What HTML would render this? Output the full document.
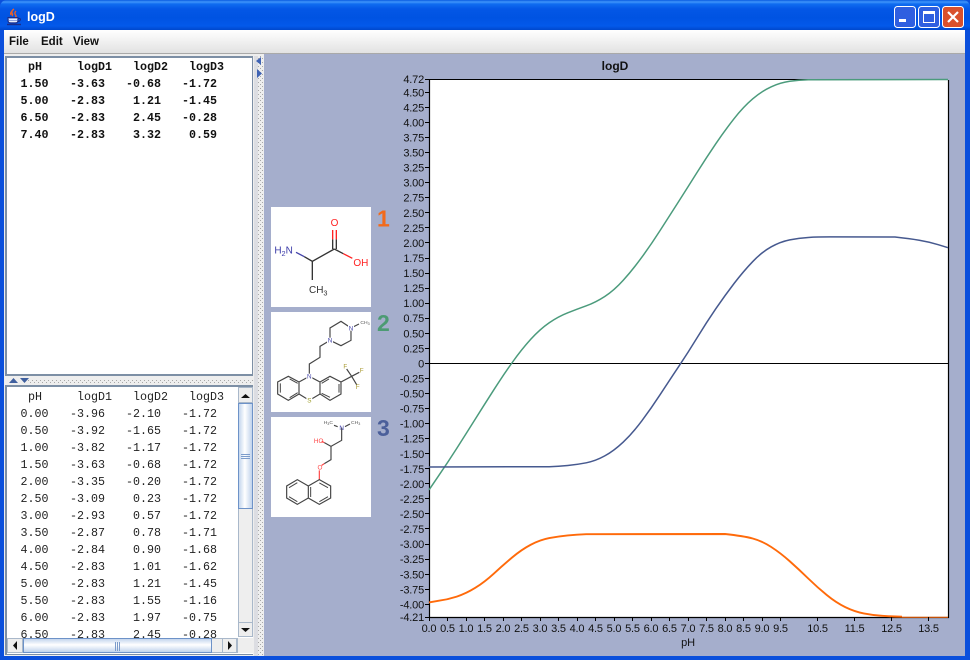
<!DOCTYPE html>
<html><head><meta charset="utf-8"><title>logD</title>
<style>
html,body{margin:0;padding:0;background:#fff}
#w{position:relative;width:970px;height:660px;overflow:hidden;background:#0a4fdc;font-family:"Liberation Sans",sans-serif}
#w div{position:absolute}
#tb{left:0;top:0;width:970px;height:30px;border-radius:7px 7px 0 0;background:linear-gradient(#0a5ce0 0,#3f95fb 2px,#0f6cf0 4px,#0457e6 9px,#0053e2 18px,#0359ea 26px,#0048cc 30px)}
#cr{left:4px;top:30px;width:961px;height:626px;background:#eeeeee}
#mb{left:4px;top:30px;width:961px;height:23px;background:linear-gradient(#fff,#f2f2f2 45%,#e2e2e2);border-bottom:1px solid #a9a9a9}
.m{top:35px;font-size:11.5px;font-weight:bold;color:#111;line-height:14px}
#rp{left:264px;top:54px;width:701px;height:602px;background:#a5aecc}
#t1{left:5px;top:56px;width:245px;height:316px;background:#fff;border:solid #7d8fa5;border-width:2px 1px 2px 2px}
#t2{left:5px;top:385px;width:246px;height:267px;background:#fff;border:solid #7d8fa5;border-width:2px 0 1px 2px;overflow:hidden}
.r{left:0;width:240px;height:17px;font:11.67px/17px "Liberation Mono",monospace;color:#222}
.b{font-weight:bold;color:#111}
.r span{position:absolute;top:0;text-align:right;white-space:pre}
.a{left:0;width:41.5px}.c{left:0;width:98px}.d{left:0;width:154px}.e{left:0;width:210px}
.ha{left:0;width:35px}.hc{left:0;width:105px}.hd{left:0;width:161px}.he{left:0;width:217px}
.sb{background:#eee;border:1px solid #a9b8ca;box-sizing:border-box}
.th{box-sizing:border-box;border:1px solid #6d92c8}
</style></head><body><div id="w">
<div id="tb"></div>
<div id="cr"></div>
<div id="mb"></div>
<div class="m" style="left:9px">File</div>
<div class="m" style="left:41px">Edit</div>
<div class="m" style="left:73px">View</div>
<div style="left:27px;top:9px;color:#fff;font-size:12.5px;font-weight:bold;line-height:16px">logD</div>
<div id="rp"></div>

<div id="t1">
<div class="r b" style="top:1px"><span class="ha">pH</span><span class="hc">logD1</span><span class="hd">logD2</span><span class="he">logD3</span></div>
<div class="r b" style="top:18px"><span class="a">1.50</span><span class="c">-3.63</span><span class="d">-0.68</span><span class="e">-1.72</span></div>
<div class="r b" style="top:35px"><span class="a">5.00</span><span class="c">-2.83</span><span class="d">1.21</span><span class="e">-1.45</span></div>
<div class="r b" style="top:52px"><span class="a">6.50</span><span class="c">-2.83</span><span class="d">2.45</span><span class="e">-0.28</span></div>
<div class="r b" style="top:69px"><span class="a">7.40</span><span class="c">-2.83</span><span class="d">3.32</span><span class="e">0.59</span></div>
</div>

<div id="t2"><div style="left:0;top:1px;width:240px;height:265px">
<div class="r" style="top:1px"><span class="ha">pH</span><span class="hc">logD1</span><span class="hd">logD2</span><span class="he">logD3</span></div>
<div class="r" style="top:18px"><span class="a">0.00</span><span class="c">-3.96</span><span class="d">-2.10</span><span class="e">-1.72</span></div>
<div class="r" style="top:35px"><span class="a">0.50</span><span class="c">-3.92</span><span class="d">-1.65</span><span class="e">-1.72</span></div>
<div class="r" style="top:52px"><span class="a">1.00</span><span class="c">-3.82</span><span class="d">-1.17</span><span class="e">-1.72</span></div>
<div class="r" style="top:69px"><span class="a">1.50</span><span class="c">-3.63</span><span class="d">-0.68</span><span class="e">-1.72</span></div>
<div class="r" style="top:86px"><span class="a">2.00</span><span class="c">-3.35</span><span class="d">-0.20</span><span class="e">-1.72</span></div>
<div class="r" style="top:103px"><span class="a">2.50</span><span class="c">-3.09</span><span class="d">0.23</span><span class="e">-1.72</span></div>
<div class="r" style="top:120px"><span class="a">3.00</span><span class="c">-2.93</span><span class="d">0.57</span><span class="e">-1.72</span></div>
<div class="r" style="top:137px"><span class="a">3.50</span><span class="c">-2.87</span><span class="d">0.78</span><span class="e">-1.71</span></div>
<div class="r" style="top:154px"><span class="a">4.00</span><span class="c">-2.84</span><span class="d">0.90</span><span class="e">-1.68</span></div>
<div class="r" style="top:171px"><span class="a">4.50</span><span class="c">-2.83</span><span class="d">1.01</span><span class="e">-1.62</span></div>
<div class="r" style="top:188px"><span class="a">5.00</span><span class="c">-2.83</span><span class="d">1.21</span><span class="e">-1.45</span></div>
<div class="r" style="top:205px"><span class="a">5.50</span><span class="c">-2.83</span><span class="d">1.55</span><span class="e">-1.16</span></div>
<div class="r" style="top:222px"><span class="a">6.00</span><span class="c">-2.83</span><span class="d">1.97</span><span class="e">-0.75</span></div>
<div class="r" style="top:239px"><span class="a">6.50</span><span class="c">-2.83</span><span class="d">2.45</span><span class="e">-0.28</span></div>
</div></div>

<!-- vertical scrollbar -->
<div class="sb" style="left:238px;top:387px;width:15px;height:250px"></div>
<div class="sb" style="left:238px;top:387px;width:15px;height:16px"></div>
<div class="th" style="left:238px;top:403px;width:15px;height:106px;background:linear-gradient(90deg,#c4d6ee,#fff 45%,#c0d3ec)"></div>
<div class="sb" style="left:238px;top:622px;width:15px;height:15px"></div>
<!-- horizontal scrollbar -->
<div class="sb" style="left:7px;top:638px;width:231px;height:15px"></div>
<div class="sb" style="left:7px;top:638px;width:16px;height:15px"></div>
<div class="th" style="left:23px;top:638px;width:189px;height:15px;background:linear-gradient(#c4d6ee,#fff 45%,#c0d3ec)"></div>
<div class="sb" style="left:222px;top:638px;width:15px;height:15px"></div>
<div style="left:238px;top:638px;width:15px;height:15px;background:#eee"></div>

<svg width="970" height="660" style="position:absolute;left:0;top:0" font-family="'Liberation Sans',sans-serif">
<defs><pattern id="dp" width="4" height="4" patternUnits="userSpaceOnUse"><rect width="1" height="1" fill="#a8a8a8"/><rect x="2" y="2" width="1" height="1" fill="#a8a8a8"/></pattern></defs>
<!-- dividers -->
<rect x="254" y="56" width="4" height="600" fill="#dcdde2"/>
<rect x="258" y="56" width="5" height="600" fill="url(#dp)"/>
<rect x="28" y="379" width="225" height="4" fill="url(#dp)"/>
<path d="M261 57v8l-5-4zM257 69v9l5-4.500z" fill="#3f63b4"/>
<path d="M9 383l4.500-5 4.500 5zM20 378h9l-4.500 5z" fill="#40609f"/>
<!-- scrollbar glyphs -->
<path d="M241 398l4.500-4 4.500 4zM241 628h9l-4.500 4zM17 641v9l-4-4.500zM228 641v9l4-4.500z" fill="#111"/>
<path d="M241 454.500h9M241 456.500h9M241 458.500h9" stroke="#7c9ccb" stroke-width="1"/>
<path d="M115.500 642v9M117.500 642v9M119.500 642v9" stroke="#7c9ccb" stroke-width="1"/>
<!-- java icon -->
<path d="M14 9q-3 2-2 4t0 3M16 11q-2 2-.5 4t-.5 2M12 11q-2 2-1 4" stroke="#e8602a" stroke-width="1.400" fill="none"/>
<path d="M8 17.500h10v3q0 2.500-3 2.500h-4q-3 0-3-2.500z" fill="#8fa4e0" stroke="#1b2c88" stroke-width="1"/>
<path d="M9 19.500h8M9 21.500h8" stroke="#e8eefc" stroke-width="1"/>
<path d="M18 18.500h2q1.500 1-1 3h-1" fill="none" stroke="#1b2c88"/>
<path d="M7 24.500h14" stroke="#1b2c88" stroke-width="1.400"/>
<!-- window buttons -->
<g>
<rect x="894.500" y="6.500" width="21" height="21" rx="3" fill="#2f5fe0" stroke="#fff"/>
<rect x="918.500" y="6.500" width="21" height="21" rx="3" fill="#2f5fe0" stroke="#fff"/>
<rect x="942.500" y="6.500" width="21" height="21" rx="3" fill="#d9502c" stroke="#fff"/>
<rect x="899" y="19" width="7" height="3" fill="#fff"/>
<rect x="923.500" y="11.500" width="11" height="11" fill="none" stroke="#fff"/><rect x="923" y="11" width="12" height="3" fill="#fff"/>
<path d="M948 12l10 10M958 12l-10 10" stroke="#fff" stroke-width="2.200"/>
</g>

<!-- chart -->
<text x="615" y="70" font-size="12" font-weight="bold" text-anchor="middle" fill="#111">logD</text>
<rect x="429" y="79" width="519" height="538" fill="#fff"/>
<path d="M429 363.500H948" stroke="#000" stroke-width="1"/>
<path d="M429.500 79V617.500H948.500V80" fill="none" stroke="#000" stroke-width="1.200"/>
<path d="M429 79.500H817" stroke="#000" stroke-width="1"/>
<path fill="none" stroke="#ff6a0a" stroke-width="1.900" d="M429 602.400L438.250 600.800Q447.500 599.600 456.750 596.600Q466 593.600 475.250 587.850Q484.500 582.100 493.750 573.650Q503 565.200 512.250 557.400Q521.500 549.600 530.750 544.750Q540 539.900 549.250 538.100Q558.500 536.300 567.750 535.400Q577 534.500 586.250 534.200L725 534Q743.500 536 752.750 538.500Q762 541 771.250 547Q780.500 553 789.750 561.250Q799 569.500 808.250 578.500Q817.500 587.500 826.750 595Q836 602.600 845.250 607.100Q854.500 611.600 863.750 613.400Q873 615.200 882.250 615.850Q891.500 616.500 902 616.700"/>
<path d="M902 617.300H948" stroke="#ff6a0a" stroke-width="1"/>
<path fill="none" stroke="#4b9b7c" stroke-width="1.500" d="M429 489.900L438.250 476.350Q447.500 462.800 456.750 448.350Q466 433.900 475.250 419.150Q484.500 404.400 493.750 389.950Q503 375.500 512.250 362.500Q521.500 349.500 530.750 339.300Q540 329.100 549.250 322.750Q558.500 316.400 567.750 312.800Q577 309.200 586.250 305.850Q595.500 302.500 604.750 296.500Q614 290.500 623.250 280.250Q632.500 270 641.750 257.350Q651 244.700 660.250 230.250Q669.500 215.800 678.750 201.350Q688 186.900 697.250 172.150Q706.500 157.400 715.750 143.800Q725 130.200 734.250 118.450Q743.500 106.700 752.750 98.850Q762 91 771.250 86.800Q780.500 82.600 789.750 81.300Q799 80 808.250 79.750L948 79.500"/>
<path fill="none" stroke="#46598f" stroke-width="1.500" d="M429 467L549.250 466.700Q558.500 466.400 567.750 465.500Q577 464.600 586.250 462.800Q595.500 461 604.750 455.900Q614 450.800 623.250 442.050Q632.500 433.300 641.750 420.950Q651 408.600 660.250 394.450Q669.500 380.300 678.750 366.450Q688 352.600 697.250 337.500Q706.500 322.400 715.750 308.850Q725 295.300 734.250 283.250Q743.500 271.200 752.750 261.550Q762 251.900 771.250 246.800Q780.500 241.700 789.750 239.850Q799 238 808.250 237.450Q817.500 236.900 830 236.900L895 237Q910 238.700 919.250 240.200Q928.500 241.700 938.250 244.700L948 247.700"/>
<path d="M425 79.500h4M425 92.500h4M425 107.500h4M425 122.500h4M425 137.500h4M425 152.500h4M425 167.500h4M425 182.500h4M425 197.500h4M425 212.500h4M425 227.500h4M425 242.500h4M425 258.500h4M425 273.500h4M425 288.500h4M425 303.500h4M425 318.500h4M425 333.500h4M425 348.500h4M425 363.500h4M425 378.500h4M425 393.500h4M425 408.500h4M425 423.500h4M425 438.500h4M425 453.500h4M425 468.500h4M425 483.500h4M425 498.500h4M425 513.500h4M425 528.500h4M425 544.500h4M425 559.500h4M425 574.500h4M425 589.500h4M425 604.500h4M425 617.500h4" stroke="#000"/>
<path d="M429.500 617v4M447.500 617v4M466.500 617v4M484.500 617v4M503.500 617v4M521.500 617v4M540.500 617v4M558.500 617v4M577.500 617v4M595.500 617v4M614.500 617v4M632.500 617v4M651.500 617v4M669.500 617v4M688.500 617v4M706.500 617v4M725.500 617v4M743.500 617v4M762.500 617v4M780.500 617v4M817.500 617v4M854.500 617v4M891.500 617v4M928.500 617v4" stroke="#000"/>
<g font-size="11" fill="#111" text-anchor="end" letter-spacing="-.2">
<text x="424" y="83">4.72</text><text x="424" y="96.300">4.50</text><text x="424" y="111.300">4.25</text><text x="424" y="126.400">4.00</text><text x="424" y="141.500">3.75</text><text x="424" y="156.500">3.50</text><text x="424" y="171.600">3.25</text><text x="424" y="186.700">3.00</text><text x="424" y="201.700">2.75</text><text x="424" y="216.800">2.50</text><text x="424" y="231.800">2.25</text><text x="424" y="246.900">2.00</text><text x="424" y="262">1.75</text><text x="424" y="277">1.50</text><text x="424" y="292.100">1.25</text><text x="424" y="307.200">1.00</text><text x="424" y="322.200">0.75</text><text x="424" y="337.300">0.50</text><text x="424" y="352.300">0.25</text><text x="424" y="367.400">0</text><text x="424" y="382.500">-0.25</text><text x="424" y="397.500">-0.50</text><text x="424" y="412.600">-0.75</text><text x="424" y="427.700">-1.00</text><text x="424" y="442.700">-1.25</text><text x="424" y="457.800">-1.50</text><text x="424" y="472.800">-1.75</text><text x="424" y="487.900">-2.00</text><text x="424" y="503">-2.25</text><text x="424" y="518">-2.50</text><text x="424" y="533.100">-2.75</text><text x="424" y="548.200">-3.00</text><text x="424" y="563.200">-3.25</text><text x="424" y="578.300">-3.50</text><text x="424" y="593.300">-3.75</text><text x="424" y="608.400">-4.00</text><text x="424" y="621">-4.21</text>
</g>
<g font-size="11" fill="#111" text-anchor="middle" letter-spacing="-.2">
<text x="429" y="632">0.0</text><text x="447.500" y="632">0.5</text><text x="466" y="632">1.0</text><text x="484.500" y="632">1.5</text><text x="503" y="632">2.0</text><text x="521.500" y="632">2.5</text><text x="540" y="632">3.0</text><text x="558.500" y="632">3.5</text><text x="577" y="632">4.0</text><text x="595.500" y="632">4.5</text><text x="614" y="632">5.0</text><text x="632.500" y="632">5.5</text><text x="651" y="632">6.0</text><text x="669.500" y="632">6.5</text><text x="688" y="632">7.0</text><text x="706.500" y="632">7.5</text><text x="725" y="632">8.0</text><text x="743.500" y="632">8.5</text><text x="762" y="632">9.0</text><text x="780.500" y="632">9.5</text><text x="817.500" y="632">10.5</text><text x="854.500" y="632">11.5</text><text x="891.500" y="632">12.5</text><text x="928.500" y="632">13.5</text>
<text x="688" y="646">pH</text>
</g>

<!-- molecule backgrounds -->
<rect x="271" y="207" width="100" height="100" fill="#fff"/>
<rect x="271" y="312" width="100" height="100" fill="#fff"/>
<rect x="271" y="417" width="100" height="100" fill="#fff"/>
<!-- molecule 1 -->
<g transform="translate(265,200) scale(.3333)" fill="none" stroke-width="4">
<path d="M93 157L118 170" stroke="#4444aa"/><path d="M118 170L142 184L208 147M142 184V240" stroke="#333"/>
<path d="M203 147V118M214 147V118M208 147L235 161" stroke="#333"/>
<path d="M203 118V90M214 118V90M235 161L262 175" stroke="#f22"/>
<g stroke="none" font-size="30" font-family="'Liberation Sans',sans-serif">
<text x="28" y="160" fill="#3a3aa8">H<tspan font-size="22" dy="8">2</tspan><tspan dy="-8">N</tspan></text>
<text x="197" y="78" fill="#f22">O</text>
<text x="265" y="198" fill="#f22">OH</text>
<text x="132" y="279" fill="#333">CH<tspan font-size="22" dy="8">3</tspan></text>
</g></g>
<!-- molecule 2 -->
<g transform="translate(265,308) scale(.3333)" fill="none" stroke-width="3.500" stroke="#444">
<path d="M258 60L228 40L195 60V97M195 97L228 113L258 97V60M258 60L282 48" />
<path d="M195 97L165 115V148L133 168V205M133 205L102 222L70 205L38 222V258L70 277L102 258V222M133 205L165 222L195 205L228 222V258L195 277L165 258V222M102 258L133 277L165 258M228 222L260 205M260 205L245 183M260 205L283 193M260 205L275 230"/>
<path d="M46 226V254M74 213L98 226M74 269L98 254M170 226L192 213M222 228V254M195 268L170 256" stroke-width="3"/>
<g stroke="none" font-size="19" text-anchor="middle" font-family="'Liberation Sans',sans-serif">
<rect x="249" y="52" width="18" height="16" fill="#fff"/><text x="258" y="67" fill="#4444aa">N</text>
<rect x="186" y="89" width="18" height="16" fill="#fff"/><text x="195" y="104" fill="#4444aa">N</text>
<rect x="124" y="197" width="18" height="16" fill="#fff"/><text x="133" y="212" fill="#4444aa">N</text>
<rect x="124" y="270" width="18" height="15" fill="#fff"/><text x="133" y="284" fill="#999922">S</text>
<text x="300" y="48" fill="#555" font-size="15">CH<tspan font-size="11" dy="3">3</tspan></text>
<g fill="#a89a30"><text x="241" y="181">F</text><text x="290" y="193">F</text><text x="278" y="243">F</text></g>
</g></g>
<!-- molecule 3 -->
<g transform="translate(265,412) scale(.3333)" fill="none" stroke-width="3.500" stroke="#444">
<path d="M230 47V85L198 103L178 92M198 103V143L178 155M207 40L218 44M255 36L240 44"/>
<path d="M178 92L170 88M178 155L170 160M163 175V203" stroke="#f44"/>
<path d="M163 203L197 222V258L163 277L130 258V222ZM130 222L97 203L65 222V258L97 277L130 258"/>
<path d="M163 213L189 227M189 254L163 269M137 225V255M97 212L72 227M72 254L97 269" stroke-width="3"/>
<g stroke="none" font-size="19" text-anchor="middle" font-family="'Liberation Sans',sans-serif">
<text x="230" y="54" fill="#4444aa">N</text>
<text x="190" y="36" fill="#555" font-size="15">H<tspan font-size="11" dy="3">3</tspan><tspan dy="-3">C</tspan></text>
<text x="272" y="36" fill="#555" font-size="15">CH<tspan font-size="11" dy="3">3</tspan></text>
<text x="161" y="93" fill="#f44">HO</text>
<text x="165" y="172" fill="#f44">O</text>
</g></g>
<g font-size="23" font-weight="bold">
<text x="377" y="226.500" fill="#f26a1b">1</text>
<text x="377" y="331" fill="#4c9b73">2</text>
<text x="377" y="436" fill="#4b5f9a">3</text>
</g>
</svg>
</div></body></html>
